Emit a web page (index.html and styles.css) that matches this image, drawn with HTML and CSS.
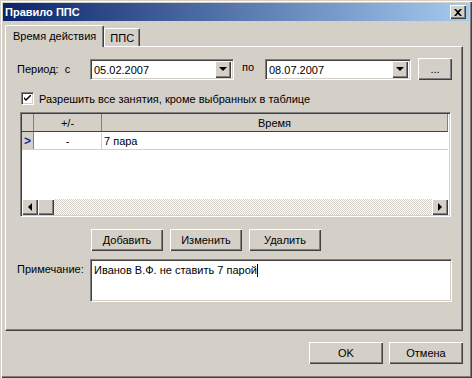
FILE: index.html
```html
<!DOCTYPE html>
<html lang="ru">
<head>
  <meta charset="UTF-8" />
  <title>Правило ППС</title>
  <link rel="stylesheet" href="styles.css">
</head>
<body>
  <div class="window">
    <div class="titlebar">
      <span class="title">Правило ППС</span>
      <button class="close-btn">
        <svg width="8" height="7" viewBox="0 0 8 7"><path d="M0 0h2l2 2 2-2h2L5 3.5 8 7H6L4 5 2 7H0l3-3.5z" fill="#000"/></svg>
      </button>
    </div>

    <div class="client">
      <div class="tabs">
        <div class="tab active">Время действия</div>
        <div class="tab">ППС</div>
      </div>

      <div class="panel">
        <div class="row period">
          <span class="label">Период:&nbsp; с</span>
          <div class="combo combo-from">
            <span class="combo-text">05.02.2007</span>
            <span class="combo-btn"><i class="down"></i></span>
          </div>
          <span class="po">по</span>
          <div class="combo combo-to">
            <span class="combo-text">08.07.2007</span>
            <span class="combo-btn"><i class="down"></i></span>
          </div>
          <button class="btn dots">...</button>
        </div>

        <label class="check-row">
          <span class="checkbox">
            <svg width="7" height="7" viewBox="0 0 7 7"><path d="M0 2l2 2 5-5v2L2 6 0 4z" fill="#000"/></svg>
          </span>
          Разрешить все занятия, кроме выбранных в таблице
        </label>

        <div class="grid">
          <div class="grid-head">
            <div class="cell ind"></div>
            <div class="cell pm">+/-</div>
            <div class="cell time">Время</div>
          </div>
          <div class="grid-row">
            <div class="cell ind"><span class="arrow">&gt;</span></div>
            <div class="cell pm">-</div>
            <div class="cell time">7 пара</div>
          </div>
          <div class="grid-empty"></div>
          <div class="hscroll">
            <span class="sb-btn"><i class="left"></i></span>
            <span class="sb-thumb"></span>
            <span class="sb-track"></span>
            <span class="sb-btn"><i class="right"></i></span>
          </div>
        </div>

        <div class="actions">
          <button class="btn">Добавить</button>
          <button class="btn">Изменить</button>
          <button class="btn">Удалить</button>
        </div>

        <div class="row note">
          <span class="label">Примечание:</span>
          <div class="memo">Иванов В.Ф. не ставить 7 парой<span class="caret"></span></div>
        </div>
      </div>

      <div class="footer">
        <button class="btn wide">OK</button>
        <button class="btn wide">Отмена</button>
      </div>
    </div>
  </div>
</body>
</html>
```

FILE: styles.css
```css
* {
  box-sizing: border-box;
}
body {
  margin: 0;
  background: #d4d0c8;
  font-family: "Liberation Sans", Arial, sans-serif;
  font-size: 11px;
  color: #000;
}
.window {
  width: 472px;
  height: 378px;
  padding: 3px;
  background: #d4d0c8;
  box-shadow: inset 1px 1px #d4d0c8, inset 2px 2px #fff, inset -1px -1px #404040, inset -2px -2px #808080;
}
.titlebar {
  height: 18px;
  display: flex;
  align-items: center;
  justify-content: space-between;
  padding: 0 3px 0 2px;
  background: linear-gradient(to right, #0a246a, #a6caf0);
}
.title {
  color: #fff;
  font-weight: bold;
  font-size: 11px;
}
.close-btn {
  width: 16px;
  height: 14px;
  padding: 0;
  border: none;
  background: #d4d0c8;
  display: flex;
  align-items: center;
  justify-content: center;
  box-shadow: inset 1px 1px #fff, inset -1px -1px #404040, inset -2px -2px #808080;
}
.client {
  padding: 4px 0 0 2px;
}
.tabs {
  display: flex;
  align-items: flex-end;
  height: 21px;
}
.tab {
  height: 18px;
  padding: 3px 5px 0 5px;
  border-top: 1px solid #fff;
  border-left: 1px solid #fff;
  border-right: 1px solid #404040;
  border-radius: 2px 2px 0 0;
  box-shadow: inset -1px 0 #808080;
}
.tab.active {
  height: 22px;
  padding: 4px 7px 0 7px;
  margin-bottom: -1px;
  background: #d4d0c8;
  position: relative;
}
.panel {
  width: 458px;
  height: 285px;
  padding: 11px 0 0 11px;
  border-top: 1px solid #fff;
  border-left: 1px solid #fff;
  border-right: 1px solid #404040;
  border-bottom: 1px solid #404040;
  box-shadow: inset -1px -1px #808080;
}
.row {
  display: flex;
  align-items: center;
}
.label {
  width: 73px;
  flex: none;
}
.combo {
  height: 21px;
  background: #fff;
  display: flex;
  align-items: center;
  justify-content: space-between;
  padding: 2px;
  border-top: 1px solid #808080;
  border-left: 1px solid #808080;
  border-right: 1px solid #fff;
  border-bottom: 1px solid #fff;
  box-shadow: inset 1px 1px #404040, inset -1px -1px #d4d0c8;
}
.combo-from {
  width: 144px;
}
.combo-to {
  width: 146px;
}
.combo-text {
  padding-left: 1px;
  padding-top: 1px;
}
.combo-btn {
  width: 16px;
  height: 17px;
  background: #d4d0c8;
  display: flex;
  align-items: center;
  justify-content: center;
  box-shadow: inset 1px 1px #fff, inset -1px -1px #404040, inset -2px -2px #808080;
}
.down {
  border-top: 4px solid #000;
  border-left: 4px solid transparent;
  border-right: 4px solid transparent;
}
.po {
  width: 31px;
  padding-left: 8px;
  margin-bottom: 4px;
}
.btn {
  height: 22px;
  width: 72px;
  padding: 0;
  border: none;
  background: #d4d0c8;
  font: inherit;
  color: #000;
  box-shadow: inset 1px 1px #fff, inset -1px -1px #404040, inset -2px -2px #808080;
}
.dots {
  width: 34px;
  margin-left: 7px;
}
.check-row {
  display: flex;
  align-items: center;
  gap: 5px;
  margin: 12px 0 0 4px;
  height: 13px;
}
.checkbox {
  width: 13px;
  height: 13px;
  background: #fff;
  display: flex;
  align-items: center;
  justify-content: center;
  border-top: 1px solid #808080;
  border-left: 1px solid #808080;
  border-right: 1px solid #fff;
  border-bottom: 1px solid #fff;
  box-shadow: inset 1px 1px #404040, inset -1px -1px #d4d0c8;
}
.grid {
  width: 431px;
  height: 105px;
  margin: 7px 0 0 3px;
  display: flex;
  flex-direction: column;
  background: #fff;
  border-top: 1px solid #808080;
  border-left: 1px solid #808080;
  border-right: 1px solid #fff;
  border-bottom: 1px solid #fff;
  box-shadow: inset 1px 1px #404040, inset -1px -1px #d4d0c8;
  padding: 1px 2px 1px 1px;
}
.grid-head,
.grid-row {
  display: flex;
  height: 18px;
}
.grid-head {
  background: #d4d0c8;
}
.grid-head .cell {
  text-align: center;
  border-right: 1px solid #808080;
  border-bottom: 1px solid #404040;
}
.cell {
  display: flex;
  align-items: center;
  justify-content: center;
}
.ind {
  width: 12px;
}
.pm {
  width: 68px;
}
.time {
  flex: 1;
}
.grid-row {
  border-bottom: 1px solid #d4d0c8;
}
.grid-row .ind {
  background: #d4d0c8;
  border-right: 1px solid #808080;
}
.grid-row .pm {
  border-right: 1px solid #d4d0c8;
}
.grid-row .time {
  justify-content: flex-start;
  padding-left: 2px;
}
.arrow {
  color: #1a2aa0;
  font-weight: bold;
  font-size: 12px;
}
.grid-empty {
  flex: 1;
}
.hscroll {
  height: 16px;
  display: flex;
  background: repeating-conic-gradient(#d4d0c8 0 25%, #fff 0 50%) 0 0 / 2px 2px;
}
.sb-btn,
.sb-thumb {
  width: 16px;
  height: 16px;
  background: #d4d0c8;
  display: flex;
  align-items: center;
  justify-content: center;
  box-shadow: inset 1px 1px #fff, inset -1px -1px #404040, inset -2px -2px #808080;
}
.sb-track {
  flex: 1;
}
.left {
  border-right: 4px solid #000;
  border-top: 4px solid transparent;
  border-bottom: 4px solid transparent;
}
.right {
  border-left: 4px solid #000;
  border-top: 4px solid transparent;
  border-bottom: 4px solid transparent;
}
.actions {
  display: flex;
  gap: 7px;
  margin: 12px 0 0 74px;
}
.note {
  align-items: flex-start;
  margin-top: 8px;
}
.note .label {
  padding-top: 4px;
}
.memo {
  width: 362px;
  height: 43px;
  background: #fff;
  padding: 4px 3px;
  border-top: 1px solid #808080;
  border-left: 1px solid #808080;
  border-right: 1px solid #fff;
  border-bottom: 1px solid #fff;
  box-shadow: inset 1px 1px #404040, inset -1px -1px #d4d0c8;
}
.caret {
  display: inline-block;
  width: 1px;
  height: 13px;
  background: #000;
  vertical-align: -3px;
}
.footer {
  display: flex;
  justify-content: flex-end;
  gap: 6px;
  width: 458px;
  margin-top: 11px;
}
.wide {
  width: 74px;
}
```
